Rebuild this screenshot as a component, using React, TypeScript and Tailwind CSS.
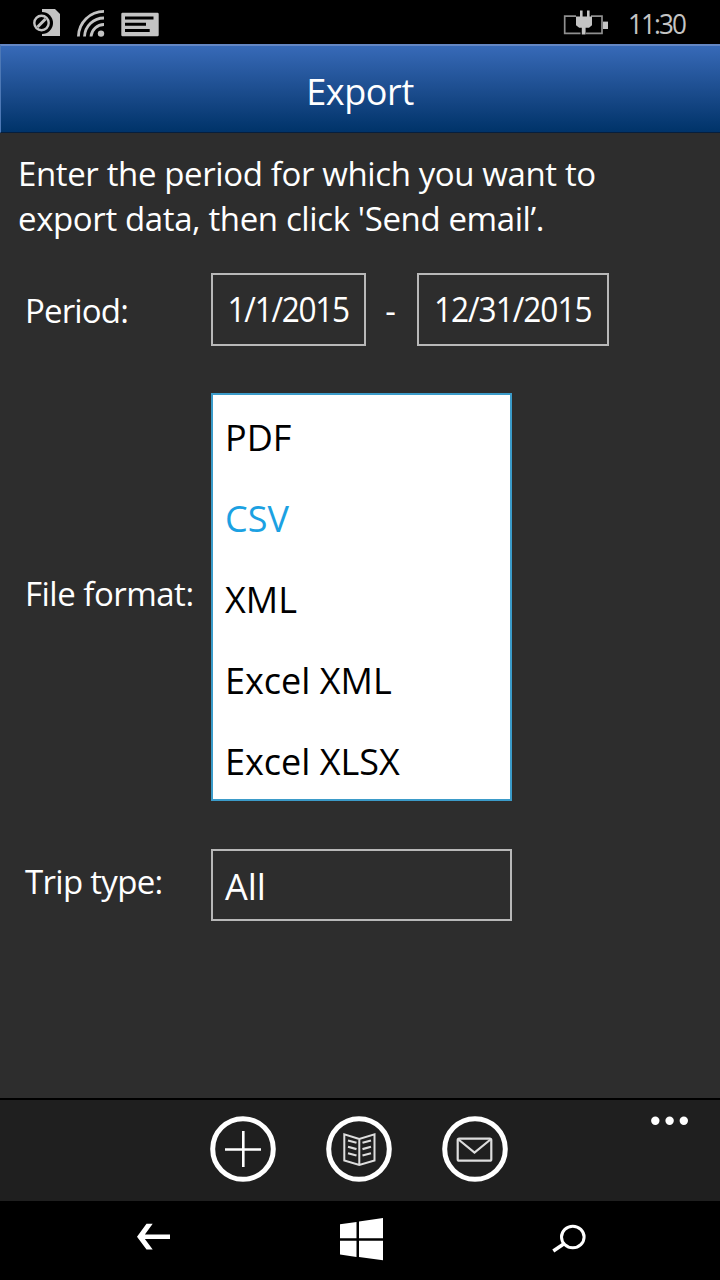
import { useState } from 'react'
import type { ReactNode } from 'react'
import clsx from 'clsx'

const FORMATS = ['PDF', 'CSV', 'XML', 'Excel XML', 'Excel XLSX']

function StatusBar() {
  return (
    <div className="flex h-11 items-start justify-between bg-black text-[#c4c4c4]">
      <svg className="h-11 w-40" viewBox="0 0 160 44" fill="currentColor">
        {/* sim card */}
        <path d="M42 9h13l5 5v22H42z" />
        <circle cx="42" cy="23" r="11" fill="#000" />
        <circle cx="41.5" cy="23" r="7.2" fill="none" stroke="currentColor" strokeWidth="2.4" />
        <path d="M37.5 27l8-8" stroke="currentColor" strokeWidth="3" />
        {/* wifi */}
        <g fill="none" stroke="currentColor" strokeWidth="2.8">
          <path d="M78.4 36.5A25.6 25.6 0 0 1 104 11.4" />
          <path d="M84.5 36.5A19.5 19.5 0 0 1 104 18" />
          <path d="M91 36.5A13 13 0 0 1 104 24.5" />
        </g>
        <circle cx="101" cy="33.6" r="3.2" />
        {/* message */}
        <rect x="121.3" y="12.7" width="37.4" height="23.6" rx="1.2" />
        <path d="M125 18h28.5M125 24.2h21M125 30.5h24.7" stroke="#000" strokeWidth="2.9" />
      </svg>
      <div className="flex">
        <svg className="h-11 w-12" viewBox="560 0 48 44" fill="currentColor">
          <path
            d="M576 16.2h-11.3v17.2H580.5M586 33.4h16V16.2H591"
            fill="none"
            stroke="#8f8f8f"
            strokeWidth="1.7"
          />
          <rect x="603" y="21.6" width="5" height="7.4" />
          <path d="M580 10.5h2.6v6h4.4v-6h2.6v6h2.4v8.7l-3 2.6h-3.4v6.6h-3.8v-6.6h-2.6l-3.2-2.6v-8.7h4z" />
        </svg>
        <span className="ml-5 mr-8 w-[60px] origin-left scale-x-[0.93] text-[28px] leading-[46px] tracking-[-2px]">
          11:30
        </span>
      </div>
    </div>
  )
}

function RoundButton({ label, children }: { label: string; children: ReactNode }) {
  return (
    <button aria-label={label} className="size-[66px]">
      <svg className="size-full" viewBox="0 0 66 66" fill="none" stroke="#fff">
        <circle cx="33" cy="33" r="30.3" strokeWidth="5" />
        {children}
      </svg>
    </button>
  )
}

function AppBar() {
  return (
    <div className="grid h-[103px] grid-cols-[1fr_auto_1fr] border-t-2 border-black bg-[#1f1f1f] pt-4">
      <div />
      <div className="mr-[3px] flex gap-[50px]">
        <RoundButton label="Add">
          <path d="M33.3 15v36M15 33.5h36" strokeWidth="2.6" />
        </RoundButton>
        <RoundButton label="Trips">
          <path
            d="M33.3 23L18.3 18.4V44.5L33.3 49L48.5 44.5V18.4zV49"
            stroke="#ddd"
            strokeWidth="2"
          />
          <path
            d="M22 24.5l8.5 2.3M22 30.8l8.5 2.3M22 37.2l8.5 2.3M45 24.5l-8.5 2.3M45 30.8l-8.5 2.3M45 37.2l-8.5 2.3"
            stroke="#ddd"
            strokeWidth="2.2"
          />
        </RoundButton>
        <RoundButton label="Send email">
          <rect x="15.7" y="22.7" width="33.6" height="22" rx="1.5" stroke="#ddd" strokeWidth="2.2" />
          <path d="M16.5 23.5L32.5 36.6L48.5 23.5" stroke="#ddd" strokeWidth="2.2" />
        </RoundButton>
      </div>
      <svg className="mr-8 h-3 w-[37px] justify-self-end" viewBox="0 0 37 12" fill="#fff">
        <circle cx="4.3" cy="4.7" r="4.2" />
        <circle cx="18.6" cy="4.7" r="4.2" />
        <circle cx="32.8" cy="4.7" r="4.2" />
      </svg>
    </div>
  )
}

function NavBar() {
  return (
    <svg className="h-[79px] w-full bg-black" viewBox="0 1201 720 79" fill="#fff">
      <path d="M137 1236.7l9.5-13h6.2l-7.8 10.8H170v4.4h-25.1l7.8 10.6h-6.2z" />
      <path d="M340 1224.2l16.5-2.3v16.3H340zM359 1221.5l24-3.4v20.1h-24zM340 1240.7h16.5v16.2l-16.5-2.3zM359 1240.7h24v19.5l-24-3.1z" />
      <g fill="none" stroke="#fff">
        <ellipse cx="572.8" cy="1237" rx="11.3" ry="10.8" strokeWidth="3" />
        <path d="M564 1243.8l-10.7 7.2" strokeWidth="3.6" />
      </g>
    </svg>
  )
}

export default function App() {
  const [format, setFormat] = useState('CSV')

  return (
    <div className="flex h-[1280px] w-[720px] flex-col overflow-hidden whitespace-nowrap bg-[#2d2d2d] font-['Open_Sans','Noto_Sans',sans-serif] text-white">
      <StatusBar />
      <header className="h-[89px] border-b border-l border-t-2 border-b-[#061e3c] border-l-[#4d78b5] border-t-[#6487c4] bg-linear-to-b from-[#376ab8] to-[#003369] text-center">
        <h1 className="pr-px text-[36px] leading-[91px] tracking-[-0.4px]">Export</h1>
      </header>

      <main className="flex grow flex-col">
        <p className="mt-[18px] pl-[18px] text-[33px] leading-[45.4px] tracking-[-0.38px]">
          Enter the period for which you want to
          <br />
          export data, then click 'Send email’.
        </p>

        <div className="mt-[31px] flex h-[73px] items-center">
          <span className="w-[211px] pl-[25px] pt-0.5 text-[33px] tracking-[-0.85px]">Period:</span>
          <button className="flex h-full w-[155px] items-center justify-center border-2 border-[#b8b8b8] text-[34px]">
            <span className="scale-x-[0.93] tracking-[-1.4px]">1/1/2015</span>
          </button>
          <span className="w-[51px] pr-0.5 pt-0.5 text-center text-[33px]">-</span>
          <button className="flex h-full w-48 items-center justify-center border-2 border-[#b8b8b8] text-[34px]">
            <span className="scale-x-[0.93] tracking-[-1.1px]">12/31/2015</span>
          </button>
        </div>

        <div className="mt-[47px] flex h-[408px] items-center">
          <span className="w-[211px] pb-1.5 pl-[25px] text-[33px] tracking-[-0.5px]">File format:</span>
          <ul className="h-full w-[301px] border-2 border-[#3b9bc9] bg-white pl-3 pt-[2px] text-[36px] leading-[81px] text-black">
            {FORMATS.map((name) => (
              <li
                key={name}
                onClick={() => setFormat(name)}
                className={clsx('h-[81px]', name === format && 'text-[#1ba1e2]')}
              >
                {name}
              </li>
            ))}
          </ul>
        </div>

        <div className="mt-12 flex h-[72px] items-center">
          <span className="w-[211px] pb-1.5 pl-[25px] text-[33px] tracking-[-0.7px]">Trip type:</span>
          <button className="h-full w-[301px] border-2 border-[#b8b8b8] pl-3 pt-1 text-left text-[36px]">
            All
          </button>
        </div>
      </main>

      <AppBar />
      <NavBar />
    </div>
  )
}
